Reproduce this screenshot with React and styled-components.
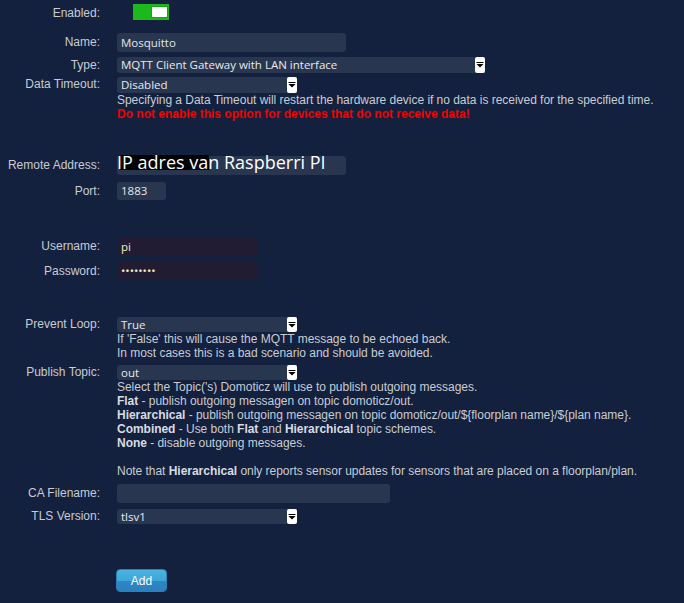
import React from 'react';
import styled, { createGlobalStyle } from 'styled-components';

const Global = createGlobalStyle`
  html, body {
    margin: 0;
    padding: 0;
    background: #13203e;
  }
  body {
    font-family: "Liberation Sans", Arial, sans-serif;
    font-size: 12px;
    color: #c9cdd4;
  }
`

const Form = styled.div`
  padding-top: 4px;
  width: 684px;
  min-height: 603px;
  box-sizing: border-box;
`

const Row = styled.div`
  display: grid;
  grid-template-columns: 100px 1fr;
  column-gap: 17px;
  margin-top: ${p => p.$mt || 0}px;
`

const Label = styled.div`
  text-align: right;
  font-family: "Liberation Sans", Arial, sans-serif;
  font-size: 12px;
  color: #c8ccd3;
  height: ${p => p.$h}px;
  line-height: ${p => p.$lh || p.$h}px;
  white-space: nowrap;
`

const Field = styled.div`
  display: flex;
  flex-direction: column;
  align-items: flex-start;
`

const Input = styled.div`
  position: relative;
  box-sizing: border-box;
  width: ${p => p.$w}px;
  height: ${p => p.$h}px;
  line-height: ${p => p.$h}px;
  padding-left: 4px;
  border-radius: 3px;
  background: ${p => (p.$dark ? '#211c31' : '#28364f')};
  color: ${p => (p.$dark ? '#f3ecc4' : '#e4e6ea')};
  font-family: "Open Sans", "DejaVu Sans", sans-serif;
  font-size: 11.5px;
  white-space: nowrap;
`

const BigWrap = styled.span`
  position: relative;
  z-index: 0;
`

const BigText = styled.span`
  position: relative;
  font-family: "Open Sans", "DejaVu Sans", sans-serif;
  font-size: 18px;
  color: #ffffff;
  margin-left: -4px;
  line-height: 19px;
  top: -3px;
  &::before {
    content: '';
    position: absolute;
    left: 3px;
    top: 5px;
    width: 89px;
    height: 15px;
    background: #000;
    z-index: -1;
  }
`

const SelectBox = styled.div`
  box-sizing: border-box;
  display: flex;
  width: ${p => p.$w}px;
  height: ${p => p.$h}px;
  border-radius: 3px 0 0 3px;
  background: #28364f;
  color: #e8eaee;
  font-family: "Open Sans", "DejaVu Sans", sans-serif;
  font-size: 11.5px;
  line-height: ${p => p.$h}px;
`

const SelectText = styled.span`
  flex: 1;
  padding-left: 4px;
  white-space: nowrap;
  overflow: hidden;
`

const Arrow = styled.span`
  width: 10px;
  height: 100%;
  background: #fff;
  border-radius: 2px;
  display: flex;
  align-items: center;
  justify-content: center;
`

const Toggle = styled.div`
  margin-left: 16px;
  width: 36px;
  height: 16px;
  background: #1cb91c;
  display: flex;
  align-items: center;
  justify-content: flex-end;
  padding-right: 2px;
  box-sizing: border-box;
`

const Knob = styled.div`
  width: 15px;
  height: 10px;
  background: #fff;
  box-shadow: 0 0 0 1px #17a417;
`

const Help = styled.div`
  font-family: "Liberation Sans", Arial, sans-serif;
  font-size: 12px;
  line-height: 14px;
  color: #c9cdd4;
  white-space: nowrap;
  letter-spacing: -0.03px;
  b { color: #d9dce1; }
`

const Warn = styled.div`
  font-family: "Liberation Sans", Arial, sans-serif;
  font-size: 12px;
  line-height: 14px;
  font-weight: bold;
  color: #f00000;
  white-space: nowrap;
`

const Button = styled.button`
  margin-left: -1px;
  width: 51px;
  height: 23px;
  border: 1px solid #2b80bb;
  border-radius: 4px;
  background: linear-gradient(#4ab3e0 0%, #3fa6d8 50%, #2d88c4 52%, #2a80be 100%);
  color: #fff;
  font-family: "Liberation Sans", Arial, sans-serif;
  font-size: 12px;
  padding: 0;
`

const Select = ({ w, h, children }) => (
  <SelectBox $w={w} $h={h}>
    <SelectText>{children}</SelectText>
    <Arrow>
      <svg width="8" height="6" viewBox="0 0 8 6">
        <rect x="0.5" y="0" width="7" height="1" fill="#000" />
        <polygon points="0.5,2 7.5,2 4,5.5" fill="#000" />
      </svg>
    </Arrow>
  </SelectBox>
)

export default function App() {
  return (
    <Form>
      <Global />
      <Row>
        <Label $h={17} $lh={19}>Enabled:</Label>
        <Field>
          <Toggle><Knob /></Toggle>
        </Field>
      </Row>
      <Row $mt={12}>
        <Label $h={19}>Name:</Label>
        <Field><Input $w={229} $h={19}>Mosquitto</Input></Field>
      </Row>
      <Row $mt={5}>
        <Label $h={16}>Type:</Label>
        <Field><Select w={368} h={16}>MQTT Client Gateway with LAN interface</Select></Field>
      </Row>
      <Row $mt={4}>
        <Label $h={15}>Data Timeout:</Label>
        <Field>
          <Select w={180} h={16}>Disabled</Select>
          <Help>Specifying a Data Timeout will restart the hardware device if no data is received for the specified time.</Help>
          <Warn>Do not enable this option for devices that do not receive data!</Warn>
        </Field>
      </Row>
      <Row $mt={35}>
        <Label $h={19}>Remote Address:</Label>
        <Field>
          <Input $w={229} $h={19}>
            <BigWrap><BigText>IP adres van Raspberri PI</BigText></BigWrap>
          </Input>
        </Field>
      </Row>
      <Row $mt={7}>
        <Label $h={18}>Port:</Label>
        <Field><Input $w={49} $h={18}>1883</Input></Field>
      </Row>
      <Row $mt={37}>
        <Label $h={19}>Username:</Label>
        <Field><Input $dark $w={140} $h={19}>pi</Input></Field>
      </Row>
      <Row $mt={6}>
        <Label $h={18}>Password:</Label>
        <Field><Input $dark $w={140} $h={18}>••••••••</Input></Field>
      </Row>
      <Row $mt={37}>
        <Label $h={15}>Prevent Loop:</Label>
        <Field>
          <Select w={180} h={15}>True</Select>
          <Help>If 'False' this will cause the MQTT message to be echoed back.</Help>
          <Help>In most cases this is a bad scenario and should be avoided.</Help>
        </Field>
      </Row>
      <Row $mt={5}>
        <Label $h={15}>Publish Topic:</Label>
        <Field>
          <Select w={180} h={15}>out</Select>
          <Help>Select the Topic('s) Domoticz will use to publish outgoing messages.</Help>
          <Help><b>Flat</b> - publish outgoing messagen on topic domoticz/out.</Help>
          <Help><b>Hierarchical</b> - publish outgoing messagen on topic domoticz/out/${'{'}floorplan name{'}'}/${'{'}plan name{'}'}.</Help>
          <Help><b>Combined</b> - Use both <b>Flat</b> and <b>Hierarchical</b> topic schemes.</Help>
          <Help><b>None</b> - disable outgoing messages.</Help>
          <Help>&nbsp;</Help>
          <Help>Note that <b>Hierarchical</b> only reports sensor updates for sensors that are placed on a floorplan/plan.</Help>
        </Field>
      </Row>
      <Row $mt={6}>
        <Label $h={19}>CA Filename:</Label>
        <Field><Input $w={273} $h={19} /></Field>
      </Row>
      <Row $mt={6}>
        <Label $h={15}>TLS Version:</Label>
        <Field><Select w={180} h={15}>tlsv1</Select></Field>
      </Row>
      <Row $mt={45}>
        <span />
        <Field><Button>Add</Button></Field>
      </Row>
    </Form>
  );
}
